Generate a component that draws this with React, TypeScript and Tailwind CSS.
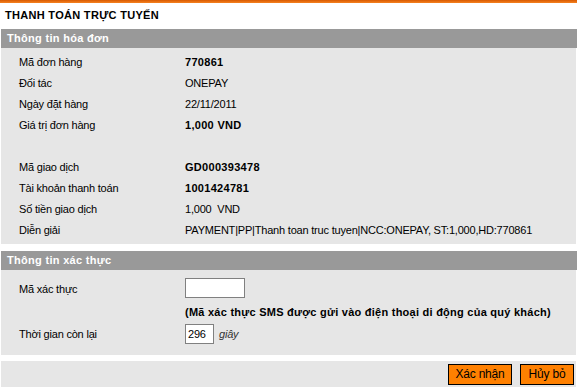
import { useState } from "react";

const invoiceRows: { label: string; value: string; bold?: boolean }[] = [
  { label: "Mã đơn hàng", value: "770861", bold: true },
  { label: "Đối tác", value: "ONEPAY" },
  { label: "Ngày đặt hàng", value: "22/11/2011" },
  { label: "Giá trị đơn hàng", value: "1,000 VND", bold: true },
  { label: "", value: "" },
  { label: "Mã giao dịch", value: "GD000393478", bold: true },
  { label: "Tài khoản thanh toán", value: "1001424781", bold: true },
  { label: "Số tiền giao dịch", value: "1,000\u00a0 VND" },
  {
    label: "Diễn giải",
    value: "PAYMENT|PP|Thanh toan truc tuyen|NCC:ONEPAY, ST:1,000,HD:770861",
  },
];

function SectionHeader({ title }: { title: string }) {
  return (
    <div className="ml-px h-[19px] bg-[#999999] pl-[6px] text-[11px] font-bold leading-[19px] tracking-[0.3px] text-white">
      {title}
    </div>
  );
}

export default function App() {
  const [otp, setOtp] = useState("");

  return (
    <div className="w-[577px] h-[387px] overflow-hidden bg-white text-[11px] tracking-[-0.2px] text-black font-['Liberation_Sans',Arial,sans-serif]">
      <div className="h-[3px] bg-gradient-to-b from-[#d85a00] to-[#f5821f]" />
      <div className="h-[26px] pl-[5px] pt-[4px] font-bold leading-[16px] tracking-[0.3px]">THANH TOÁN TRỰC TUYẾN</div>

      <SectionHeader title="Thông tin hóa đơn" />
      <div className="mx-px bg-[#e6e6e6] pt-[4px] pb-[3px]">
        {invoiceRows.map((row, i) => (
          <div key={i} className="grid h-[21px] grid-cols-[184px_1fr] items-center">
            <span className="pl-[18px]">{row.label}</span>
            <span className={row.bold ? "font-bold tracking-[0.3px]" : ""}>{row.value}</span>
          </div>
        ))}
      </div>

      <div className="h-[7px]" />

      <SectionHeader title="Thông tin xác thực" />
      <div className="mx-px h-[85px] bg-[#e6e6e6] pt-[8px]">
        <div className="grid grid-cols-[184px_1fr] items-center">
          <span className="pl-[18px] self-start pt-[3px]">Mã xác thực</span>
          <div>
            <input
              type="text"
              value={otp}
              onChange={(e) => setOtp(e.target.value)}
              className="block h-[20px] w-[60px] border border-[#808080] bg-white px-[2px] text-[11px] outline-none"
            />
            <div className="mt-[6px] font-bold leading-[16px] tracking-[0.25px]">
              (Mã xác thực SMS được gửi vào điện thoại di động của quý khách)
            </div>
          </div>
        </div>
        <div className="mt-[4px] grid grid-cols-[184px_1fr] items-center">
          <span className="pl-[18px]">Thời gian còn lại</span>
          <div className="flex items-center gap-[5px]">
            <input
              type="text"
              readOnly
              value="296"
              className="h-[20px] w-[29px] border border-[#808080] bg-white px-[2px] text-[11px] outline-none"
            />
            <i className="text-[#333]">giây</i>
          </div>
        </div>
      </div>

      <div className="h-[6px]" />

      <div className="mx-px flex h-[26px] items-start justify-end gap-[8px] bg-[#e6e6e6] pt-[3px] pr-[2px]">
        <button className="h-[21px] w-[64px] border border-black bg-[#ff8000] text-[12px] leading-[19px]">
          Xác nhận
        </button>
        <button className="h-[21px] w-[54px] border border-black bg-[#ff8000] text-[12px] leading-[19px]">
          Hủy bỏ
        </button>
      </div>
    </div>
  );
}
